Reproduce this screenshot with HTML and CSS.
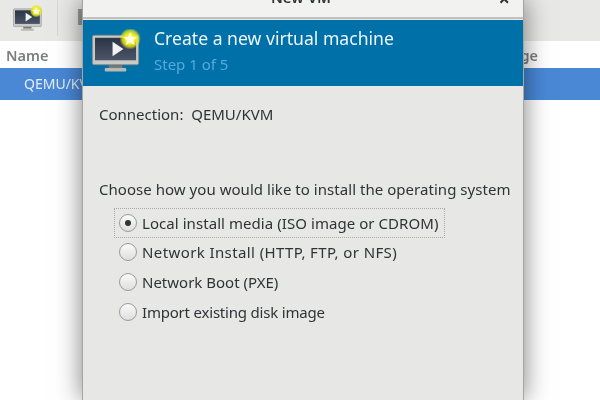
FILE: index.html
```html
<!DOCTYPE html>
<html lang="en">
<head>
    <meta charset="UTF-8">
    <meta name="viewport" content="width=device-width, initial-scale=1.0">
    <title>New VM</title>
    <link rel="stylesheet" href="styles.css">
</head>
<body>
    <svg class="defs" width="0" height="0">
        <defs>
            <radialGradient id="glow">
                <stop offset="0.45" stop-color="#f4f020"/>
                <stop offset="0.75" stop-color="#e6e81c" stop-opacity="0.75"/>
                <stop offset="1" stop-color="#e6e81c" stop-opacity="0"/>
            </radialGradient>
            <linearGradient id="screen" x1="0" y1="0" x2="0" y2="1">
                <stop offset="0" stop-color="#2c3544"/>
                <stop offset="1" stop-color="#4a5568"/>
            </linearGradient>
            <symbol id="vm-icon" viewBox="0 0 50 44">
                <rect x="0.5" y="6.5" width="47" height="30" rx="1.5" fill="#c9c9c6" stroke="#8f8f8c"/>
                <rect x="3" y="9" width="42" height="23" fill="url(#screen)"/>
                <rect x="17" y="37" width="14" height="3" fill="#77797b"/>
                <rect x="13" y="40" width="22" height="3.5" rx="1" fill="#b9b9b6"/>
                <polygon points="21,13 21,28 32,20.5" fill="#f2f2f2"/>
                <circle cx="39" cy="10" r="11" fill="url(#glow)"/>
                <polygon points="39,3.2 41.1,7.9 46,8.4 42.4,11.5 43.5,16.4 39,13.8 34.5,16.4 35.6,11.5 32,8.4 36.9,7.9" fill="#fdfbe0"/>
            </symbol>
        </defs>
    </svg>

    <div class="main-window">
        <div class="toolbar">
            <svg class="toolbar-icon"><use href="#vm-icon"/></svg>
            <div class="toolbar-sep"></div>
            <div class="toolbar-icon2"></div>
        </div>
        <div class="list-head">
            <span class="col-name">Name</span>
            <span class="col-usage">Usage</span>
        </div>
        <div class="list-row">QEMU/KVM</div>
    </div>

    <div class="dialog">
        <div class="titlebar">
            <span class="title">New VM</span>
            <span class="close">×</span>
        </div>
        <div class="banner">
            <svg class="banner-icon"><use href="#vm-icon"/></svg>
            <div>
                <div class="banner-title">Create a new virtual machine</div>
                <div class="banner-step">Step 1 of 5</div>
            </div>
        </div>
        <div class="content">
            <p class="connection">Connection:&nbsp; QEMU/KVM</p>
            <p class="choose">Choose how you would like to install the operating system</p>
            <div class="options">
                <label class="option focused"><span class="radio checked"></span>Local install media (ISO image or CDROM)</label>
                <label class="option wide"><span class="radio"></span>Network Install (HTTP, FTP, or NFS)</label>
                <label class="option"><span class="radio"></span>Network Boot (PXE)</label>
                <label class="option narrow"><span class="radio"></span>Import existing disk image</label>
            </div>
        </div>
    </div>
</body>
</html>
```

FILE: styles.css
```css
html, body {
    margin: 0;
    padding: 0;
    height: 100%;
    overflow: hidden;
}

body {
    position: relative;
    width: 600px;
    height: 400px;
    background-color: #ffffff;
    font-family: 'Noto Sans', sans-serif;
    font-size: 15px;
    color: #2e3436;
    filter: blur(0.3px);
}

.defs {
    position: absolute;
}

.toolbar {
    height: 41px;
    background-color: #e8e8e7;
    display: flex;
    align-items: flex-start;
}

.toolbar-icon {
    width: 30px;
    height: 26px;
    margin: 5px 0 0 13px;
}

.toolbar-sep {
    width: 1px;
    height: 36px;
    background-color: #d8d8d6;
    margin-left: 14px;
}

.toolbar-icon2 {
    width: 10px;
    height: 16px;
    margin: 9px 0 0 20px;
    background-color: #9a9a98;
}

.list-head {
    height: 27px;
    display: flex;
    justify-content: space-between;
    align-items: center;
    padding: 0 62px 0 6px;
    font-size: 14.5px;
    font-weight: 600;
    color: #7d7f7f;
}

.list-row {
    height: 32px;
    line-height: 32px;
    padding-left: 24px;
    background-color: #4a88d6;
    color: #e4edf8;
    font-size: 14px;
}

.dialog {
    position: absolute;
    left: 82px;
    top: 0;
    width: 442px;
    height: 400px;
    background-color: #e7e7e5;
    border-right: 1px solid #a5a5a3;
    border-left: 1px solid #a5a5a3;
    box-sizing: border-box;
    box-shadow: 0 0 24px rgba(0, 0, 0, 0.5);
}

.titlebar {
    height: 17px;
    position: relative;
    background-color: #f2f2f1;
    border-bottom: 2px solid #c2c1bd;
    text-align: center;
}

.title {
    position: absolute;
    left: -4px;
    right: 0;
    top: -13px;
    font-weight: 600;
    font-size: 15px;
}

.close {
    position: absolute;
    right: 13px;
    top: -15px;
    font-size: 20px;
    font-weight: 700;
}

.banner {
    height: 66px;
    box-sizing: border-box;
    margin-top: 1px;
    background-color: #0070a8;
    display: flex;
    align-items: flex-start;
    gap: 13px;
    padding-left: 9px;
}

.banner-icon {
    width: 49px;
    height: 43px;
    margin-top: 9px;
}

.banner-title {
    font-size: 17.6px;
    line-height: 24px;
    margin-top: 6px;
    color: #eef6fb;
    white-space: nowrap;
}

.banner-step {
    font-size: 15px;
    line-height: 20px;
    margin-top: 4px;
    color: #55aadb;
}

.content {
    padding: 0 16px;
}

.connection {
    margin: 17px 0 0;
    line-height: 22px;
}

.choose {
    margin: 53px 0 0;
    line-height: 22px;
    white-space: nowrap;
    letter-spacing: 0.04px;
}

.options {
    margin: 8px 0 0 15px;
    display: flex;
    flex-direction: column;
}

.option {
    height: 29.6px;
    box-sizing: border-box;
    display: flex;
    align-items: center;
    gap: 5px;
    padding-left: 4px;
    border: 1px solid transparent;
    width: fit-content;
    white-space: nowrap;
}

.option.focused {
    border: 1px dotted #a9a9a7;
    padding-right: 5px;
    letter-spacing: 0.06px;
}

.option.wide {
    letter-spacing: 0.4px;
}

.option.narrow {
    letter-spacing: -0.2px;
}

.radio {
    width: 16px;
    height: 16px;
    border-radius: 50%;
    border: 1px solid #9b9b99;
    background: linear-gradient(#fbfbfb, #dedede);
    display: flex;
    align-items: center;
    justify-content: center;
}

.radio.checked::after {
    content: "";
    width: 6px;
    height: 6px;
    border-radius: 50%;
    background-color: #2e3436;
}
```
